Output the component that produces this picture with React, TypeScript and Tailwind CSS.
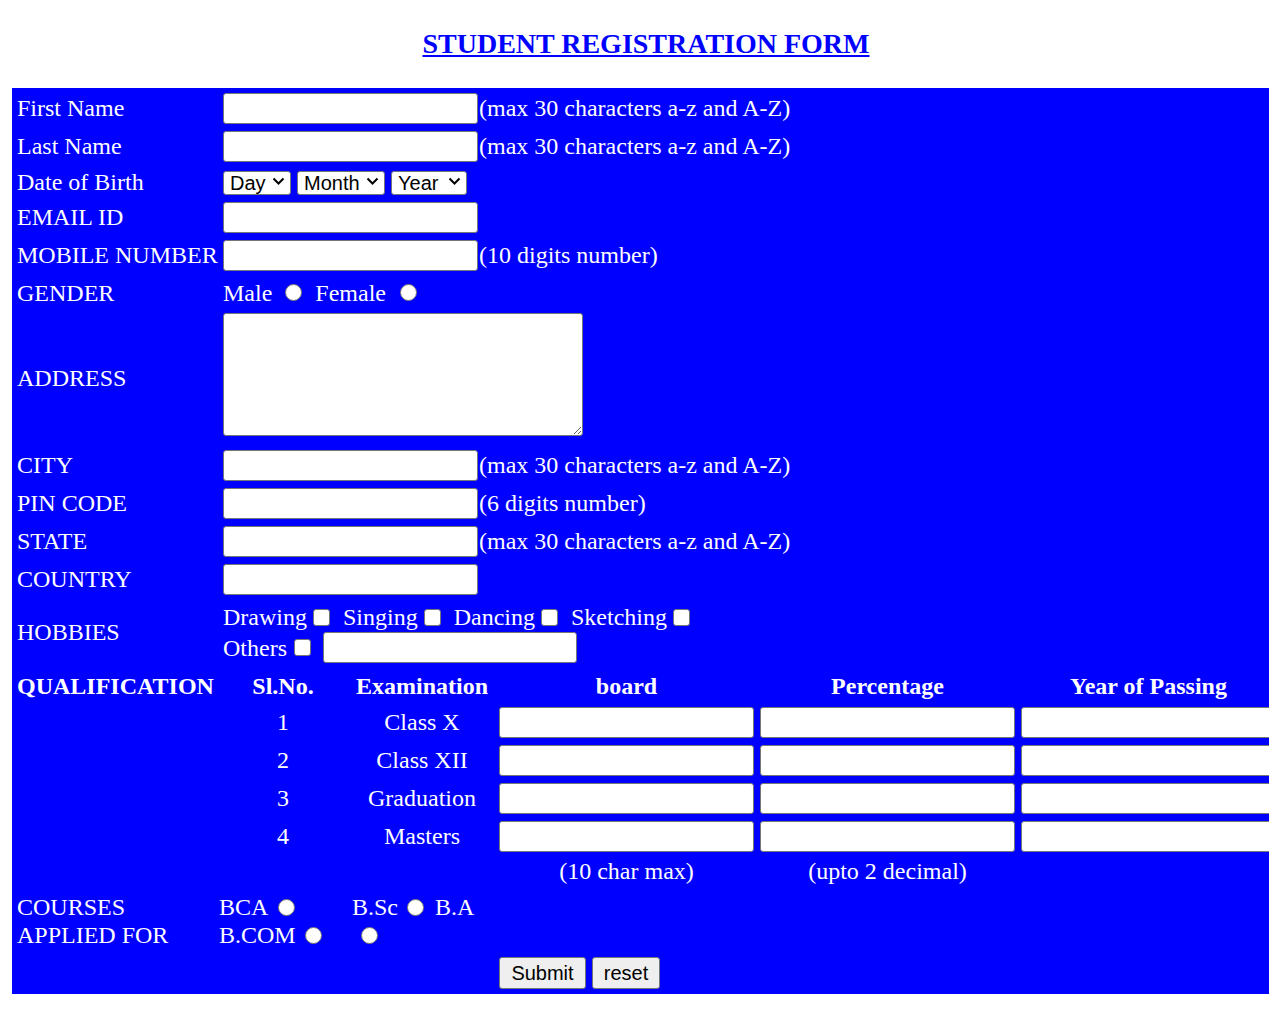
import type { ReactNode } from 'react';

const ctrlFont = "font-['Liberation_Sans',Arial,sans-serif] text-[20px] text-black";

function TextBox({ w = 'w-[255px]' }: { w?: string }) {
  return (
    <input
      type="text"
      className={`h-[31px] ${w} rounded-[3px] border border-[#767676] bg-white px-[2px] outline-none ${ctrlFont}`}
    />
  );
}

function Row({ label, h, children }: { label?: ReactNode; h: string; children?: ReactNode }) {
  return (
    <div className={`flex ${h}`}>
      <div className="flex w-[209px] shrink-0 items-center pl-[5px]">{label}</div>
      <div className="flex items-center pl-[2px]">{children}</div>
    </div>
  );
}

function Hint({ children }: { children: ReactNode }) {
  return <span className="ml-[1px] whitespace-nowrap">{children}</span>;
}

function Select({ w, label }: { w: string; label: string }) {
  return (
    <div className="relative">
      <select
        className={`h-[24px] ${w} appearance-none rounded-[3px] border border-[#767676] bg-white pl-[6px] leading-[22px] outline-none ${ctrlFont}`}
      >
        <option>{label}</option>
      </select>
      <svg
        className="pointer-events-none absolute right-[6px] top-[9px]"
        width="13"
        height="8"
        viewBox="0 0 13 8"
        fill="none"
      >
        <path d="M1.5 1.5 L6.5 6.5 L11.5 1.5" stroke="#000" strokeWidth="2" />
      </svg>
    </div>
  );
}

function Radio({ className = '' }: { className?: string }) {
  return (
    <input
      type="radio"
      className={`h-[17px] w-[17px] shrink-0 appearance-none rounded-full border-[1.5px] border-[#767676] bg-white ${className}`}
    />
  );
}

function Check({ className = '' }: { className?: string }) {
  return (
    <input
      type="checkbox"
      className={`h-[17px] w-[17px] shrink-0 appearance-none rounded-[3px] border-[1.5px] border-[#767676] bg-white ${className}`}
    />
  );
}

const exams = [
  ['1', 'Class X'],
  ['2', 'Class XII'],
  ['3', 'Graduation'],
  ['4', 'Masters'],
];

export default function App() {
  return (
    <div className="w-[1269px] overflow-hidden bg-white font-['Liberation_Serif','Times_New_Roman',serif]">
      <div className="ml-[12px] flex h-[88px] w-[1268px] items-center justify-center">
        <h1 className="text-[28px] font-bold text-[#0000ff] underline">STUDENT REGISTRATION FORM</h1>
      </div>

      <form className="ml-[12px] w-[1270px] bg-[#0000ff] pt-[1px] text-[24px] leading-[28px] text-white">
        <Row label="First Name" h="h-[38px]">
          <TextBox />
          <Hint>(max 30 characters a-z and A-Z)</Hint>
        </Row>
        <Row label="Last Name" h="h-[38px]">
          <TextBox />
          <Hint>(max 30 characters a-z and A-Z)</Hint>
        </Row>
        <Row label="Date of Birth" h="h-[33px]">
          <div className="flex gap-[6px]">
            <Select w="w-[68px]" label="Day" />
            <Select w="w-[88px]" label="Month" />
            <Select w="w-[76px]" label="Year" />
          </div>
        </Row>
        <Row label="EMAIL ID" h="h-[38px]">
          <TextBox />
        </Row>
        <Row label="MOBILE NUMBER" h="h-[38px]">
          <TextBox />
          <Hint>(10 digits number)</Hint>
        </Row>
        <Row label="GENDER" h="h-[37px]">
          <span>Male</span>
          <Radio className="ml-[13px]" />
          <span className="ml-[13px]">Female</span>
          <Radio className="ml-[14px]" />
        </Row>

        <div className="flex h-[135px]">
          <div className="flex w-[209px] shrink-0 items-center pb-[1px] pl-[5px]">ADDRESS</div>
          <div className="pl-[2px] pt-[2px]">
            <textarea className="block h-[123px] w-[360px] resize rounded-[3px] border border-[#767676] bg-white outline-none" />
          </div>
        </div>

        <Row label="CITY" h="h-[38px]">
          <TextBox />
          <Hint>(max 30 characters a-z and A-Z)</Hint>
        </Row>
        <Row label="PIN CODE" h="h-[38px]">
          <TextBox />
          <Hint>(6 digits number)</Hint>
        </Row>
        <Row label="STATE" h="h-[38px]">
          <TextBox />
          <Hint>(max 30 characters a-z and A-Z)</Hint>
        </Row>
        <Row label="COUNTRY" h="h-[38px]">
          <TextBox />
        </Row>

        <div className="flex h-[70px]">
          <div className="flex w-[209px] shrink-0 items-center pb-[2px] pl-[5px]">HOBBIES</div>
          <div className="flex flex-col pl-[2px] pt-[5px]">
            <div className="flex h-[28px] items-center">
              <span>Drawing</span>
              <Check className="ml-[6px]" />
              <span className="ml-[13px]">Singing</span>
              <Check className="ml-[6px]" />
              <span className="ml-[13px]">Dancing</span>
              <Check className="ml-[6px]" />
              <span className="ml-[13px]">Sketching</span>
              <Check className="ml-[6px]" />
            </div>
            <div className="flex h-[33px] items-center">
              <span>Others</span>
              <Check className="ml-[7px]" />
              <div className="ml-[12px]">
                <TextBox w="w-[254px]" />
              </div>
            </div>
          </div>
        </div>

        <div className="flex h-[35px] items-center font-bold">
          <div className="w-[209px] shrink-0 pl-[5px]">QUALIFICATION</div>
          <div className="w-[124px] shrink-0 text-center">Sl.No.</div>
          <div className="w-[154px] shrink-0 text-center">Examination</div>
          <div className="w-[261px] shrink-0">
            <div className="w-[255px] text-center">board</div>
          </div>
          <div className="w-[261px] shrink-0">
            <div className="w-[255px] text-center">Percentage</div>
          </div>
          <div className="w-[261px] shrink-0">
            <div className="w-[255px] text-center">Year of Passing</div>
          </div>
        </div>

        {exams.map(([no, name]) => (
          <div key={no} className="flex h-[38px] items-center">
            <div className="w-[209px] shrink-0" />
            <div className="w-[124px] shrink-0 text-center">{no}</div>
            <div className="w-[154px] shrink-0 text-center">{name}</div>
            <div className="w-[261px] shrink-0">
              <TextBox />
            </div>
            <div className="w-[261px] shrink-0">
              <TextBox />
            </div>
            <div className="w-[261px] shrink-0">
              <TextBox />
            </div>
          </div>
        ))}

        <div className="flex h-[32px] items-center">
          <div className="w-[487px] shrink-0" />
          <div className="w-[261px] shrink-0">
            <div className="w-[255px] text-center">(10 char max)</div>
          </div>
          <div className="w-[261px] shrink-0">
            <div className="w-[255px] text-center">(upto 2 decimal)</div>
          </div>
        </div>

        <div className="flex h-[64px] pt-[6px]">
          <div className="w-[207px] shrink-0 pl-[5px]">
            <div className="h-[28px]">COURSES</div>
            <div className="h-[28px]">APPLIED FOR</div>
          </div>
          <div className="w-[133px] shrink-0">
            <div className="flex h-[28px] items-center">
              <span>BCA</span>
              <Radio className="ml-[10px]" />
            </div>
            <div className="flex h-[28px] items-center">
              <span>B.COM</span>
              <Radio className="ml-[9px]" />
            </div>
          </div>
          <div>
            <div className="flex h-[28px] items-center">
              <span>B.Sc</span>
              <Radio className="ml-[9px]" />
              <span className="ml-[11px]">B.A</span>
            </div>
            <div className="flex h-[28px] items-center pl-[9px]">
              <Radio />
            </div>
          </div>
        </div>

        <div className="flex h-[43px] gap-[6px] pl-[487px] pt-[6px]">
          <button
            type="button"
            className={`h-[32px] w-[87px] rounded-[3px] border border-[#767676] bg-[#efefef] ${ctrlFont}`}
          >
            Submit
          </button>
          <button
            type="reset"
            className={`h-[32px] w-[68px] rounded-[3px] border border-[#767676] bg-[#efefef] ${ctrlFont}`}
          >
            reset
          </button>
        </div>
      </form>
      <div className="h-[38px]" />
    </div>
  );
}
